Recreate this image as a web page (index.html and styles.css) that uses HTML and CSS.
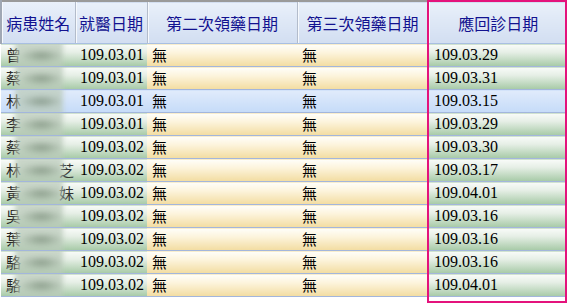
FILE: index.html
```html
<!DOCTYPE html>
<html lang="zh-Hant">
<head>
<meta charset="utf-8">
<link rel="stylesheet" href="styles.css">
</head>
<body>
<div class="wrap">
<table class="grid">
<colgroup>
<col class="c1"><col class="c2"><col class="c3"><col class="c4"><col class="c5">
</colgroup>
<thead>
<tr><th>病患姓名</th><th>就醫日期</th><th>第二次領藥日期</th><th>第三次領藥日期</th><th class="last">應回診日期</th></tr>
</thead>
<tbody>
<tr><td class="g name">曾<span class="blur"></span></td><td class="g">109.03.01</td><td class="y">無</td><td class="y">無</td><td class="g d5">109.03.29</td></tr>
<tr><td class="g name">蔡<span class="blur"></span></td><td class="g">109.03.01</td><td class="y">無</td><td class="y">無</td><td class="g d5">109.03.31</td></tr>
<tr class="sel"><td class="name">林<span class="blur"></span></td><td>109.03.01</td><td>無</td><td>無</td><td class="d5">109.03.15</td></tr>
<tr><td class="g name">李<span class="blur"></span></td><td class="g">109.03.01</td><td class="y">無</td><td class="y">無</td><td class="g d5">109.03.29</td></tr>
<tr><td class="g name">蔡<span class="blur"></span></td><td class="g">109.03.02</td><td class="y">無</td><td class="y">無</td><td class="g d5">109.03.30</td></tr>
<tr><td class="g name">林<span class="tail">芝</span><span class="blur"></span></td><td class="g">109.03.02</td><td class="y">無</td><td class="y">無</td><td class="g d5">109.03.17</td></tr>
<tr><td class="g name">黃<span class="tail">妹</span><span class="blur"></span></td><td class="g">109.03.02</td><td class="y">無</td><td class="y">無</td><td class="g d5">109.04.01</td></tr>
<tr><td class="g name">吳<span class="blur"></span></td><td class="g">109.03.02</td><td class="y">無</td><td class="y">無</td><td class="g d5">109.03.16</td></tr>
<tr><td class="g name">葉<span class="blur"></span></td><td class="g">109.03.02</td><td class="y">無</td><td class="y">無</td><td class="g d5">109.03.16</td></tr>
<tr><td class="g name">駱<span class="blur"></span></td><td class="g">109.03.02</td><td class="y">無</td><td class="y">無</td><td class="g d5">109.03.16</td></tr>
<tr><td class="g name">駱<span class="blur"></span></td><td class="g">109.03.02</td><td class="y">無</td><td class="y">無</td><td class="g d5">109.04.01</td></tr>
</tbody>
</table>
<div class="mark"></div>
</div>
</body>
</html>
```

FILE: styles.css
```css
html, body {
  margin: 0;
  padding: 0;
  background: #ffffff;
}
.wrap {
  position: relative;
  width: 567px;
  height: 303px;
  overflow: hidden;
}
.grid {
  border-collapse: collapse;
  table-layout: fixed;
  width: 567px;
  border-top: 2px solid #9a9a9a;
}
.c1 { width: 74px; }
.c2 { width: 72px; }
.c3 { width: 150px; }
.c4 { width: 131px; }
.c5 { width: 140px; }
.grid th {
  height: 41px;
  padding: 0;
  font-family: "Noto Sans CJK TC", "Noto Sans CJK SC", sans-serif;
  font-weight: normal;
  font-size: 16px;
  color: #121290;
  text-align: center;
  background: linear-gradient(#e9f0fa, #d2def1);
  border-right: 1px solid #b3bccb;
  border-bottom: 1px solid #a9bfe2;
  box-shadow: inset 1px 0 0 #f6f9fd;
}
.grid th:first-child {
  border-left: 2px solid #a0a8b4;
}
.grid th.last { border-right: none; }
.grid td {
  height: 22px;
  padding: 0 0 0 5px;
  border-bottom: 1px solid #a3b6dc;
  font-family: "Liberation Serif", "Noto Sans CJK TC", serif;
  font-size: 16px;
  color: #000;
  white-space: nowrap;
  overflow: hidden;
  line-height: 22px;
}
.grid td.g {
  background: linear-gradient(#f9fbf9, #e6efe6 35%, #a6c9a6);
}
.grid td.y {
  background: linear-gradient(#fffefa, #fcf3da 40%, #f2dca0);
  font-family: "Noto Sans CJK TC", sans-serif;
  font-size: 15px;
}
.grid tr.sel td {
  background: linear-gradient(#e0ebfb, #c5dbf8);
}
.grid tr.sel td:nth-child(3),
.grid tr.sel td:nth-child(4) {
  font-family: "Noto Sans CJK TC", sans-serif;
  font-size: 15px;
}
.grid td.d5 { padding-left: 6px; }
.grid td.name {
  padding-left: 5px;
  font-family: "Noto Sans CJK TC", sans-serif;
  font-size: 15px;
  color: #222;
  position: relative;
}
.blur {
  position: absolute;
  left: 14px;
  top: -3px;
  width: 48px;
  height: 29px;
  background:
    radial-gradient(ellipse 22px 7px at 55% 50%, rgba(95, 115, 95, 0.55), rgba(95, 115, 95, 0) 100%),
    rgba(185, 202, 185, 0.75);
  filter: blur(2.5px);
}
.tail {
  position: absolute;
  left: 58px;
  top: 0;
  color: #333;
}
.mark {
  position: absolute;
  left: 427px;
  top: 0;
  width: 136px;
  height: 299px;
  border: 2px solid #e4137c;
}
```
